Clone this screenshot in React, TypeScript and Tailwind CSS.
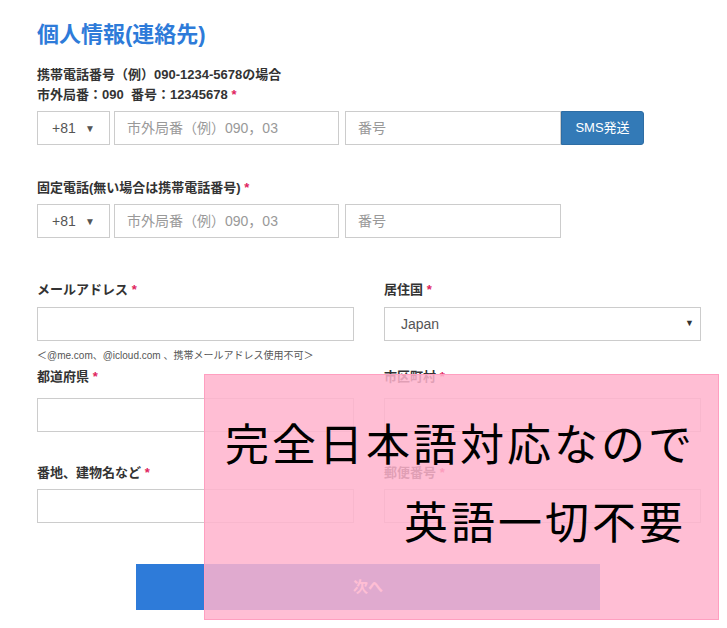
const font = { fontFamily: '"Liberation Sans", "Noto Sans CJK JP", sans-serif' }

function Label({ text, className = '' }: { text: string; className?: string }) {
  return (
    <div className={`text-[13px] font-bold text-[#333] ${className}`}>
      {text} <span className="text-[#e0245e]">*</span>
    </div>
  )
}

function Select({ value, w }: { value: string; w: string }) {
  return (
    <div className={`${w} h-[34px] border border-[#ccc] flex items-center justify-between px-[14px] text-[14px] text-[#555]`}>
      <span>{value}</span>
      <span className="text-[10px]">▼</span>
    </div>
  )
}

function Input({ placeholder = '', w }: { placeholder?: string; w: string }) {
  return (
    <div className={`${w} h-[34px] border border-[#ccc] flex items-center px-[12px] text-[14px] text-[#999]`}>
      {placeholder}
    </div>
  )
}

export default function App() {
  return (
    <div className="relative w-[727px] h-[628px] bg-white overflow-hidden" style={font}>
      <div className="pl-[37px] pt-[20px]">
        <h1 className="text-[22px] font-bold text-[#2e7bd9] leading-[30px]">個人情報(連絡先)</h1>

        <div className="mt-[15px] text-[13px] font-bold text-[#333] leading-[20px]">
          携帯電話番号（例）090-1234-5678の場合
          <br />
          市外局番：090&nbsp;&nbsp;番号：12345678 <span className="text-[#e0245e]">*</span>
        </div>
        <div className="flex mt-[6px]">
          <Select value="+81" w="w-[73px]" />
          <div className="w-[4px]" />
          <Input placeholder="市外局番（例）090，03" w="w-[225px]" />
          <div className="w-[6px]" />
          <Input placeholder="番号" w="w-[216px]" />
          <div className="w-[83px] h-[34px] bg-[#337ab7] border border-[#2e6da4] rounded-r-[3px] text-white text-[13px] flex items-center justify-center">SMS発送</div>
        </div>

        <Label text="固定電話(無い場合は携帯電話番号)" className="mt-[33px] leading-[20px]" />
        <div className="flex mt-[6px]">
          <Select value="+81" w="w-[73px]" />
          <div className="w-[4px]" />
          <Input placeholder="市外局番（例）090，03" w="w-[225px]" />
          <div className="w-[6px]" />
          <Input placeholder="番号" w="w-[216px]" />
        </div>

        <div className="grid grid-cols-[317px_317px] gap-x-[30px] mt-[42px]">
          <div>
            <Label text="メールアドレス" className="leading-[20px]" />
            <div className="mt-[7px]"><Input w="w-[317px]" /></div>
            <div className="text-[10px] text-[#555] mt-[8px] leading-[14px]">＜@me.com、@icloud.com 、携帯メールアドレス使用不可＞</div>
          </div>
          <div>
            <Label text="居住国" className="leading-[20px]" />
            <div className="mt-[7px] w-[317px] h-[34px] border border-[#ccc] flex items-center justify-between pl-[16px] pr-[6px] text-[14px] text-[#555]">
              <span>Japan</span>
              <span className="text-[9px] text-[#333]">▼</span>
            </div>
          </div>
          <div className="mt-[4px]">
            <Label text="都道府県" className="leading-[20px]" />
            <div className="mt-[11px]"><Input w="w-[317px]" /></div>
          </div>
          <div className="mt-[4px]">
            <Label text="市区町村" className="leading-[20px]" />
            <div className="mt-[11px]"><Input w="w-[317px]" /></div>
          </div>
          <div className="mt-[31px]">
            <Label text="番地、建物名など" className="leading-[20px]" />
            <div className="mt-[6px]"><Input w="w-[317px]" /></div>
          </div>
          <div className="mt-[31px]">
            <Label text="郵便番号" className="leading-[20px]" />
            <div className="mt-[6px]"><Input w="w-[317px]" /></div>
          </div>
        </div>

        <div className="ml-[99px] mt-[41px] w-[464px] h-[46px] bg-[#2e7bd9] text-white font-bold text-[15px] flex items-center justify-center">次へ</div>
      </div>

      <div className="absolute left-[204px] top-[374px] w-[515px] h-[246px] bg-[#ffb3cc]/85 border border-[#ff9fc0]">
        <div className="pl-[20px] pt-[40px] text-[44px] leading-[54px] text-black tracking-[3px] whitespace-nowrap" style={{ fontFamily: '"Noto Sans CJK JP", sans-serif', fontWeight: 400 }}>
          完全日本語対応なので
        </div>
        <div className="pl-[199px] pt-[24px] text-[44px] leading-[54px] text-black tracking-[3px] whitespace-nowrap" style={{ fontFamily: '"Noto Sans CJK JP", sans-serif', fontWeight: 400 }}>
          英語一切不要
        </div>
      </div>
    </div>
  )
}
